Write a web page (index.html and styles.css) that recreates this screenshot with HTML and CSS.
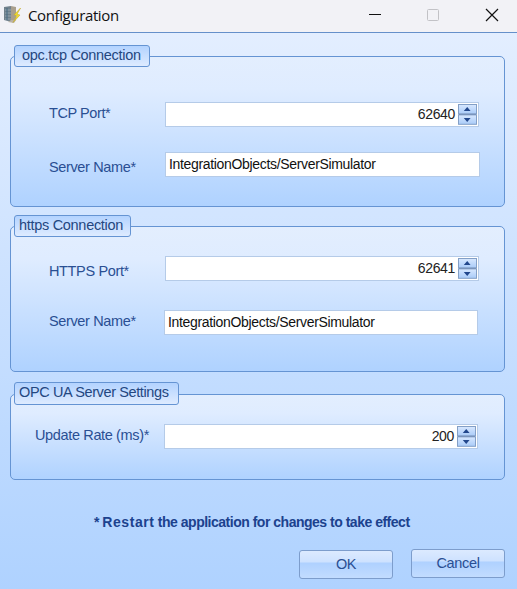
FILE: index.html
```html
<!DOCTYPE html>
<html lang="en">
<head>
<meta charset="utf-8">
<title>Configuration</title>
<link rel="stylesheet" href="styles.css">
</head>
<body>
<div class="window">
  <header class="titlebar">
    <svg class="app-icon" width="19" height="19" viewBox="0 0 19 19">
      <path d="M1 2 8 1v16l-7-2z" fill="#71818b"/>
      <path d="M8 1l5 1v13l-5 2z" fill="#a99f8d"/>
      <path d="M2 5h6M2 8h6M2 11h6M2 14h6" stroke="#96a6b0"/>
      <path d="M4 3v12" stroke="#466b82"/>
      <path d="M8 15l5 0-2 3-6-1z" fill="#b9b2a6"/>
      <path d="M17.500 3 11 10l3 .5-4 7 7-7.500-3-.8 3.500-6z" fill="#f3de27" stroke="#c3a930" stroke-width=".6"/>
    </svg>
    <h1 class="title">Configuration</h1>
    <svg class="controls" width="130" height="14" viewBox="0 0 130 14" fill="none">
      <path d="M0 6.500h12" stroke="#111"/>
      <rect x="58.500" y="1.500" width="11" height="11" rx="1" stroke="#c2c2c6"/>
      <path d="M117 1l12 12M129 1l-12 12" stroke="#111" stroke-width="1.200"/>
    </svg>
  </header>
  <main class="form">
    <section class="group tcp">
      <h2 class="legend">opc.tcp Connection</h2>
      <div class="row">
        <span class="label tight">TCP Port*</span>
        <div class="field number"><span>62640</span><svg class="spin" width="19" height="21" viewBox="0 0 19 21"><use href="#spinner"/></svg></div>
      </div>
      <div class="row">
        <span class="label low">Server Name*</span>
        <div class="field text">IntegrationObjects/ServerSimulator</div>
      </div>
    </section>
    <section class="group https">
      <h2 class="legend">https Connection</h2>
      <div class="row">
        <span class="label low">HTTPS Port*</span>
        <div class="field number"><span>62641</span><svg class="spin" width="19" height="21" viewBox="0 0 19 21"><use href="#spinner"/></svg></div>
      </div>
      <div class="row">
        <span class="label">Server Name*</span>
        <div class="field text">IntegrationObjects/ServerSimulator</div>
      </div>
    </section>
    <section class="group settings">
      <h2 class="legend">OPC UA Server Settings</h2>
      <div class="row">
        <span class="label">Update Rate (ms)*</span>
        <div class="field number"><span>200</span><svg class="spin" width="19" height="21" viewBox="0 0 19 21"><use href="#spinner"/></svg></div>
      </div>
    </section>
    <p class="note">* <span class="wide">Restart</span> the application for changes to take effect</p>
    <div class="actions">
      <button class="button ok">OK</button>
      <button class="button">Cancel</button>
    </div>
  </main>
</div>
<svg class="defs" width="0" height="0">
  <defs>
    <linearGradient id="face" x1="0" y1="0" x2="0" y2="1">
      <stop offset="0" stop-color="#d8e8ff"/>
      <stop offset="1" stop-color="#a9cbf8"/>
    </linearGradient>
    <g id="spinner">
      <rect x=".5" y=".5" width="18" height="9.500" fill="url(#face)" stroke="#839fc6"/>
      <rect x=".5" y="10.800" width="18" height="9.500" fill="url(#face)" stroke="#839fc6"/>
      <path d="M1 10.400h17" stroke="#7994bc" stroke-width="1.400"/>
      <path d="M5.800 7 9.200 3l3.400 4zM5.800 14l3.400 4 3.400-4z" fill="#22478c"/>
    </g>
  </defs>
</svg>
</body>
</html>
```
FILE: styles.css
```css
* {
  box-sizing: border-box;
}

body {
  margin: 0;
  font: 14.5px/18px "Liberation Sans", Arial, sans-serif;
  color: #2a4f93;
}

.window {
  display: flex;
  flex-direction: column;
  width: 517px;
  height: 589px;
  overflow: hidden;
}

.titlebar {
  display: flex;
  align-items: center;
  height: 32px;
  padding: 0 18px 3px 3px;
  background: #f2f2f6;
}

.title {
  flex: 1;
  margin: 0 0 0 6px;
  font: 15px/20px "Open Sans", "Noto Sans", sans-serif;
  letter-spacing: -0.38px;
  color: #111;
}

.form {
  flex: 1;
  padding: 23px 12px 0 10px;
  border-top: 1px solid #6590ca;
  background: linear-gradient(#e3eeff, #afd2ff);
}

.group {
  border: 1px solid #6594d3;
  border-radius: 5px;
  background: linear-gradient(#e3eefe, #dfecff 22%, #afd2ff);
}

.tcp {
  height: 151px;
}

.https {
  height: 146px;
  margin-top: 19px;
}

.settings {
  height: 86px;
  margin-top: 22px;
}

.legend {
  width: 136px;
  height: 22px;
  margin: -12px 0 0 3px;
  padding-left: 7px;
  border: 1px solid #6594d3;
  border-radius: 3px;
  background: linear-gradient(#b3d3ff, #deebff);
  font-size: 14.5px;
  font-weight: normal;
  line-height: 19px;
  letter-spacing: -0.3px;
  white-space: nowrap;
  color: #24477f;
}

.https .legend {
  width: 117px;
  padding-left: 4px;
}

.settings .legend {
  width: 165px;
  height: 23px;
  margin-top: -13px;
  padding-left: 4px;
  letter-spacing: -0.38px;
}

.row {
  display: flex;
  height: 25px;
  margin-left: 38px;
}

.tcp .row {
  margin-top: 35px;
}

.tcp .row + .row {
  margin-top: 25px;
}

.https .row {
  margin-top: 19px;
}

.https .row + .row {
  margin-top: 29px;
}

.settings .row {
  margin: 19px 0 0 24px;
}

.label {
  width: 116px;
  padding-top: 2px;
  letter-spacing: -0.36px;
  white-space: nowrap;
}

.tight {
  letter-spacing: -0.42px;
}

.low {
  padding-top: 6px;
}

.settings .label {
  width: 129px;
}

.https .row + .row .label {
  width: 115px;
}

.field {
  width: 314px;
  height: 25px;
  border: 1px solid #b5cbe8;
  background: #fff;
  font-size: 14px;
  line-height: 23px;
  letter-spacing: -0.33px;
  color: #222;
}

.tcp .text {
  width: 315px;
}

.text {
  padding-left: 3px;
  color: #111;
}

.number {
  display: flex;
  align-items: center;
  justify-content: flex-end;
  gap: 3px;
  padding-right: 1px;
}

.note {
  margin: 33px 0 0 84px;
  font-size: 14px;
  font-weight: bold;
  letter-spacing: -0.49px;
  white-space: nowrap;
  color: #1c428e;
}

.wide {
  letter-spacing: 0.55px;
}

.actions {
  display: flex;
  justify-content: flex-end;
  gap: 18px;
  margin-top: 18px;
}

.button {
  width: 94px;
  height: 29px;
  padding: 0;
  border: 1px solid #7d9dcc;
  border-radius: 3px;
  background: linear-gradient(#dceaff, #cee2ff 40%, #afd1ff 45%, #c2dcff);
  font: 14.5px/27px "Liberation Sans", Arial, sans-serif;
  letter-spacing: -0.35px;
  color: #2a4f93;
}

.ok {
  margin-top: 1px;
}

.defs {
  position: absolute;
}
```
